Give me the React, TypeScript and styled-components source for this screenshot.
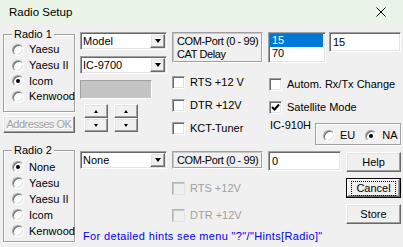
import React from "react";
import styled, { createGlobalStyle, css } from "styled-components";

const Global = createGlobalStyle`
  html, body { margin: 0; padding: 0; background: #f0f0f0; }
  * { box-sizing: border-box; }
`;

const sunken = css`
  border: 1px solid;
  border-color: #a0a0a0 #ffffff #ffffff #a0a0a0;
  box-shadow: inset 1px 1px 0 #696969, inset -1px -1px 0 #e3e3e3;
`;

const raised = css`
  border: 1px solid;
  border-color: #ffffff #696969 #696969 #ffffff;
  box-shadow: inset -1px -1px 0 #a0a0a0, inset 1px 1px 0 #e3e3e3;
  background: #f0f0f0;
`;

const Window = styled.div`
  width: 403px;
  height: 247px;
  overflow: hidden;
  background: #f0f0f0;
  font-family: "Liberation Sans", Arial, sans-serif;
  font-size: 11px;
  color: #000;
  line-height: 13px;
`;

const TitleBar = styled.div`
  height: 23px;
  background: #eaf5e8;
  display: flex;
  align-items: center;
  justify-content: space-between;
  padding: 0 17px 0 9px;
`;

const Title = styled.span`
  font-size: 11.5px;
  padding-top: 1px;
`;

const Body = styled.div`
  display: flex;
  padding-left: 3px;
`;

const LeftCol = styled.div`
  width: 72px;
  display: flex;
  flex-direction: column;
`;

const Group = styled.div<{ $top: number; $height: number; $padTop: number }>`
  position: relative;
  margin-top: ${(p) => p.$top}px;
  height: ${(p) => p.$height}px;
  padding-top: ${(p) => p.$padTop}px;
  border: 1px solid #a0a0a0;
  box-shadow: inset 1px 1px 0 #fff, 1px 1px 0 #fff;
`;

const Legend = styled.span`
  position: absolute;
  top: -7px;
  left: 8px;
  padding: 0 2px;
  background: #f0f0f0;
  line-height: 13px;
`;

const RadioRow = styled.label<{ $h: number }>`
  display: flex;
  align-items: center;
  height: ${(p) => p.$h}px;
  padding-left: 8px;
  gap: 5px;
  white-space: nowrap;
`;

const RadioCircle = styled.span<{ $on?: boolean }>`
  position: relative;
  width: 12px;
  height: 12px;
  flex: none;
  border-radius: 50%;
  background: #fff;
  border: 1px solid;
  border-color: #a0a0a0 #fff #fff #a0a0a0;
  box-shadow: inset 1px 1px 0 #696969, inset -1px -1px 0 #e3e3e3;
  &::after {
    content: "";
    display: ${(p) => (p.$on ? "block" : "none")};
    position: absolute;
    left: 3px;
    top: 3px;
    width: 4px;
    height: 4px;
    border-radius: 50%;
    background: #000;
  }
`;

const AddrButton = styled.div`
  ${raised};
  margin-top: 4px;
  height: 17px;
  display: flex;
  align-items: center;
  justify-content: center;
  white-space: nowrap;
  letter-spacing: -0.5px;
  color: #a0a0a0;
  text-shadow: 1px 1px 0 #fff;
`;

const RightArea = styled.div`
  margin-left: 5px;
  width: 323px;
  display: flex;
  flex-direction: column;
`;

const Row = styled.div<{ $top?: number; $height?: number }>`
  display: flex;
  margin-top: ${(p) => p.$top ?? 0}px;
  ${(p) => (p.$height ? `height: ${p.$height}px;` : "")}
`;

const Col = styled.div<{ $w: number; $left?: number }>`
  width: ${(p) => p.$w}px;
  margin-left: ${(p) => p.$left ?? 0}px;
  display: flex;
  flex-direction: column;
`;

const Combo = styled.div<{ $top?: number }>`
  ${sunken};
  background: #fff;
  height: 18px;
  width: 87px;
  margin-top: ${(p) => p.$top ?? 0}px;
  display: flex;
  align-items: center;
  padding: 0 1px 0 2px;
`;

const ComboText = styled.span`
  flex: 1;
`;

const DropBtn = styled.span`
  ${raised};
  width: 15px;
  height: 14px;
  display: flex;
  align-items: center;
  justify-content: center;
`;

const Arrow = styled.span<{ $up?: boolean; $w: number }>`
  width: 0;
  height: 0;
  border-left: ${(p) => p.$w / 2}px solid transparent;
  border-right: ${(p) => p.$w / 2}px solid transparent;
  ${(p) =>
    p.$up
      ? `border-bottom: ${Math.ceil(p.$w / 2)}px solid #000;`
      : `border-top: ${Math.ceil(p.$w / 2)}px solid #000;`}
`;

const GrayBox = styled.div`
  margin-top: 6px;
  width: 72px;
  height: 19px;
  background: #c4c4c4;
  border: 1px solid;
  border-color: #a0a0a0 #fff #fff #a0a0a0;
`;

const SpinRow = styled.div`
  display: flex;
  gap: 6px;
  margin-top: 5px;
  padding-left: 4px;
`;

const Spin = styled.div`
  display: flex;
  flex-direction: column;
  width: 24px;
`;

const SpinBtn = styled.span`
  ${raised};
  height: 14px;
  display: flex;
  align-items: center;
  justify-content: center;
`;

const InfoBox = styled.div<{ $h: number }>`
  height: ${(p) => p.$h}px;
  border: 1px solid;
  border-color: #a0a0a0 #fff #fff #a0a0a0;
  box-shadow: inset 1px 1px 0 #c8c8c8, inset -1px -1px 0 #a0a0a0;
  padding-left: 4px;
  white-space: nowrap;
  letter-spacing: -0.4px;
  display: flex;
  flex-direction: column;
  justify-content: ${(p) => (p.$h < 25 ? "center" : "flex-start")};
  padding-top: ${(p) => (p.$h < 25 ? 0 : 2)}px;
`;

const CheckRow = styled.label<{ $h: number; $top?: number; $disabled?: boolean; $indent?: number }>`
  display: flex;
  align-items: center;
  gap: 5px;
  height: ${(p) => p.$h}px;
  margin-top: ${(p) => p.$top ?? 0}px;
  padding-left: ${(p) => p.$indent ?? 0}px;
  white-space: nowrap;
  color: ${(p) => (p.$disabled ? "#a0a0a0" : "#000")};
`;

const CheckBox = styled.span<{ $disabled?: boolean }>`
  width: 13px;
  height: 13px;
  flex: none;
  background: ${(p) => (p.$disabled ? "#f0f0f0" : "#fff")};
  border: 1px solid;
  border-color: ${(p) =>
    p.$disabled ? "#b4b4b4 #e3e3e3 #e3e3e3 #b4b4b4" : "#a0a0a0 #fff #fff #a0a0a0"};
  box-shadow: ${(p) =>
    p.$disabled
      ? "inset 1px 1px 0 #c8c8c8"
      : "inset 1px 1px 0 #696969, inset -1px -1px 0 #e3e3e3"};
  display: flex;
  align-items: center;
  justify-content: center;
`;

const ListBox = styled.div`
  ${sunken};
  background: #fff;
  width: 58px;
  height: 31px;
  padding: 1px 2px 0 1px;
`;

const ListItem = styled.div<{ $sel?: boolean }>`
  height: 13px;
  padding-left: 2px;
  background: ${(p) => (p.$sel ? "#0078d7" : "transparent")};
  color: ${(p) => (p.$sel ? "#fff" : "#000")};
`;

const TextBox = styled.div<{ $w: number }>`
  ${sunken};
  background: #fff;
  width: ${(p) => p.$w}px;
  height: 20px;
  padding: 3px 0 0 3px;
`;

const ModelLabel = styled.span`
  padding-left: 2px;
  margin-top: -2px;
`;

const RegionBox = styled.div`
  margin-left: auto;
  margin-top: 2px;
  width: 86px;
  height: 22px;
  border: 1px solid #a0a0a0;
  box-shadow: inset 1px 1px 0 #fff, 1px 1px 0 #fff;
  display: flex;
  align-items: center;
  padding: 3px 0 0 7px;
  gap: 5px;
  white-space: nowrap;
`;

const Spacer = styled.span<{ $w: number }>`
  width: ${(p) => p.$w}px;
  flex: none;
`;

const Buttons = styled.div`
  margin-left: 5px;
  margin-top: 1px;
  width: 55px;
  display: flex;
  flex-direction: column;
  gap: 6px;
`;

const Button = styled.div<{ $default?: boolean }>`
  ${raised};
  height: 20px;
  display: flex;
  align-items: center;
  justify-content: center;
  ${(p) =>
    p.$default &&
    css`
      border-color: #000;
      box-shadow: inset -1px -1px 0 #696969, inset 1px 1px 0 #fff,
        inset -2px -2px 0 #a0a0a0;
    `}
`;

const Focus = styled.span`
  border: 1px dotted #000;
  padding: 1px 4px;
  line-height: 11px;
`;

const Hint = styled.div`
  color: #0000ff;
  padding-left: 3px;
  white-space: nowrap;
  letter-spacing: 0.35px;
`;

const CheckMark = () => (
  <svg width="9" height="9" viewBox="0 0 9 9">
    <path d="M1 4 L3.5 6.5 L8 1.5" stroke="#000" strokeWidth="2" fill="none" />
  </svg>
);

const CloseIcon = () => (
  <svg width="10" height="10" viewBox="0 0 10 10">
    <path d="M0.5 0.5 L9.5 9.5 M9.5 0.5 L0.5 9.5" stroke="#000" strokeWidth="1" />
  </svg>
);

export default function App() {
  const radio1 = ["Yaesu", "Yaesu II", "Icom", "Kenwood"];
  const radio2 = ["None", "Yaesu", "Yaesu II", "Icom", "Kenwood"];
  return (
    <Window>
      <Global />
      <TitleBar>
        <Title>Radio Setup</Title>
        <CloseIcon />
      </TitleBar>
      <Body>
        <LeftCol>
          <Group $top={11} $height={78} $padTop={7}>
            <Legend>Radio 1</Legend>
            {radio1.map((r) => (
              <RadioRow key={r} $h={15.7}>
                <RadioCircle $on={r === "Icom"} />
                {r}
              </RadioRow>
            ))}
          </Group>
          <AddrButton>Addresses OK</AddrButton>
          <Group $top={17} $height={92} $padTop={8}>
            <Legend>Radio 2</Legend>
            {radio2.map((r) => (
              <RadioRow key={r} $h={16}>
                <RadioCircle $on={r === "None"} />
                {r}
              </RadioRow>
            ))}
          </Group>
        </LeftCol>

        <RightArea>
          <Row $top={9}>
            <Col $w={87}>
              <Combo>
                <ComboText>Model</ComboText>
                <DropBtn>
                  <Arrow $w={7} />
                </DropBtn>
              </Combo>
              <Combo $top={6}>
                <ComboText>IC-9700</ComboText>
                <DropBtn>
                  <Arrow $w={7} />
                </DropBtn>
              </Combo>
              <GrayBox />
              <SpinRow>
                {[0, 1].map((i) => (
                  <Spin key={i}>
                    <SpinBtn>
                      <Arrow $up $w={5} />
                    </SpinBtn>
                    <SpinBtn>
                      <Arrow $w={5} />
                    </SpinBtn>
                  </Spin>
                ))}
              </SpinRow>
            </Col>
            <Col $w={91} $left={5}>
              <InfoBox $h={31}>
                <span>COM-Port (0 - 99)</span>
                <span>CAT Delay</span>
              </InfoBox>
              <CheckRow $h={23} $top={8}>
                <CheckBox />
                RTS +12 V
              </CheckRow>
              <CheckRow $h={23}>
                <CheckBox />
                DTR +12V
              </CheckRow>
              <CheckRow $h={23}>
                <CheckBox />
                KCT-Tuner
              </CheckRow>
            </Col>
            <Col $w={133} $left={5}>
              <Row>
                <ListBox>
                  <ListItem $sel>15</ListItem>
                  <ListItem>70</ListItem>
                </ListBox>
                <Spacer $w={3} />
                <TextBox $w={72}>15</TextBox>
              </Row>
              <CheckRow $h={23} $top={9.5} $indent={1}>
                <CheckBox />
                Autom. Rx/Tx Change
              </CheckRow>
              <CheckRow $h={23} $indent={1}>
                <CheckBox>
                  <CheckMark />
                </CheckBox>
                Satellite Mode
              </CheckRow>
              <Row $top={2.5}>
                <ModelLabel>IC-910H</ModelLabel>
                <RegionBox>
                  <RadioCircle />
                  EU
                  <Spacer $w={0} />
                  <RadioCircle $on />
                  NA
                </RegionBox>
              </Row>
            </Col>
          </Row>

          <Row $top={6} $height={79}>
            <Col $w={87}>
              <Combo>
                <ComboText>None</ComboText>
                <DropBtn>
                  <Arrow $w={7} />
                </DropBtn>
              </Combo>
            </Col>
            <Col $w={91} $left={5}>
              <InfoBox $h={18}>
                <span>COM-Port (0 - 99)</span>
              </InfoBox>
              <CheckRow $h={23} $top={7.5} $disabled>
                <CheckBox $disabled />
                RTS +12V
              </CheckRow>
              <CheckRow $h={23} $top={4} $disabled>
                <CheckBox $disabled />
                DTR +12V
              </CheckRow>
            </Col>
            <Col $w={73} $left={5}>
              <TextBox $w={73}>0</TextBox>
            </Col>
            <Buttons>
              <Button>Help</Button>
              <Button $default>
                <Focus>Cancel</Focus>
              </Button>
              <Button>Store</Button>
            </Buttons>
          </Row>
          <Hint>For detailed hints see menu "?"/"Hints[Radio]"</Hint>
        </RightArea>
      </Body>
    </Window>
  );
}
